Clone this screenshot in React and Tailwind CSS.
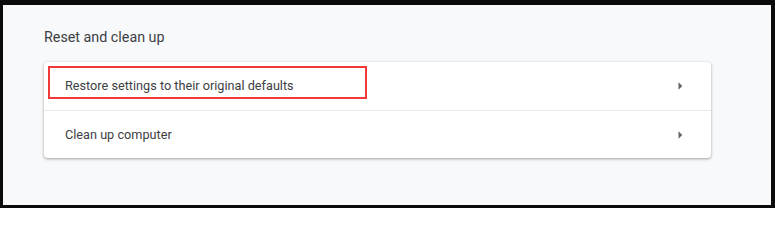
import React from "react";

function Arrow() {
  return (
    <svg width="18" height="18" viewBox="0 0 24 24" className="text-[#5f6368]">
      <path d="M10 17l5-5-5-5v10z" fill="currentColor" />
    </svg>
  );
}

function Row({ label, first }) {
  return (
    <div className={`h-[48px] flex items-center justify-between pl-[21px] pr-[22px] ${first ? "" : "border-t border-[#e8eaed]"}`}>
      <span className="text-[12.7px] text-[#3c4043]">{label}</span>
      <Arrow />
    </div>
  );
}

export default function App() {
  return (
    <div className="w-[775px] h-[208px] bg-[#0b0b0b] pt-[5px] pl-[3px] pr-[4px] pb-[3px]" style={{ fontFamily: "Roboto, 'Liberation Sans', sans-serif" }}>
      <div className="h-full bg-[#f8f9fa] pl-[41px] pt-[22px]">
        <h2 className="text-[14.3px] leading-[20px] text-[#3c4043] font-normal">Reset and clean up</h2>
        <div className="relative mt-[15px] w-[667px] bg-white rounded-[4px] shadow-[0_1px_2px_rgba(60,64,67,0.3),0_1px_3px_1px_rgba(60,64,67,0.15)]">
          <Row label="Restore settings to their original defaults" first />
          <Row label="Clean up computer" />
          <div className="absolute left-[4px] top-[4px] w-[319px] h-[33px] border-2 border-[#f03a3a]" />
        </div>
      </div>
    </div>
  );
}
